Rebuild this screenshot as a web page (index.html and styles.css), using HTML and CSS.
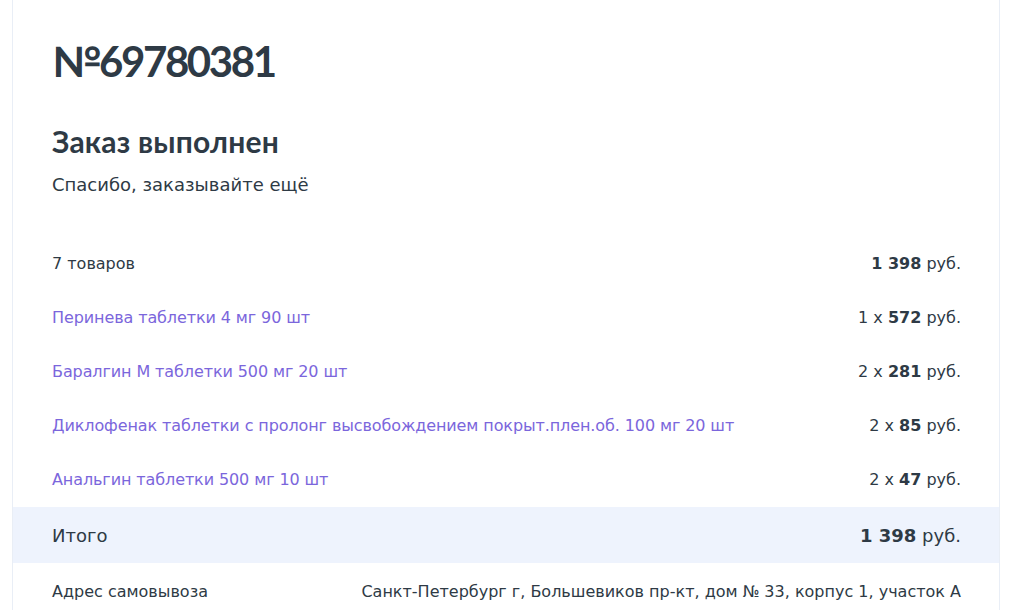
FILE: index.html
```html
<!DOCTYPE html>
<html lang="ru">
<head>
  <meta charset="UTF-8" />
  <title>Заказ №69780381</title>
  <link rel="stylesheet" href="styles.css">
</head>
<body>
  <main class="order">
    <div class="order-head">
      <h1>№69780381</h1>
      <h2>Заказ выполнен</h2>
      <p>Спасибо, заказывайте ещё</p>
    </div>
    <div class="order-items">
      <div class="row">
        <span>7 товаров</span>
        <span><b>1 398</b> руб.</span>
      </div>
      <div class="row">
        <a href="#">Перинева таблетки 4 мг 90 шт</a>
        <span>1 x <b>572</b> руб.</span>
      </div>
      <div class="row">
        <a href="#">Баралгин М таблетки 500 мг 20 шт</a>
        <span>2 x <b>281</b> руб.</span>
      </div>
      <div class="row">
        <a href="#">Диклофенак таблетки с пролонг высвобождением покрыт.плен.об. 100 мг 20 шт</a>
        <span>2 x <b>85</b> руб.</span>
      </div>
      <div class="row">
        <a href="#">Анальгин таблетки 500 мг 10 шт</a>
        <span>2 x <b>47</b> руб.</span>
      </div>
    </div>
    <div class="row total">
      <span>Итого</span>
      <span><b>1 398</b> руб.</span>
    </div>
    <div class="row address">
      <span>Адрес самовывоза</span>
      <span>Санкт-Петербург г, Большевиков пр-кт, дом № 33, корпус 1, участок А</span>
    </div>
  </main>
</body>
</html>
```

FILE: styles.css
```css
body {
  margin: 0;
  background: #fff;
  font-family: "DejaVu Sans", sans-serif;
  color: #2e3a45;
}
.order {
  margin: 0 12px;
  border-left: 1px solid #e9eef6;
  border-right: 1px solid #e9eef6;
  min-height: 640px;
}
.order-head {
  padding: 35px 39px 38px;
}
.order-head h1 {
  margin: 0;
  font-family: Lato, sans-serif;
  font-weight: 700;
  font-size: 42px;
  line-height: 52px;
  letter-spacing: -2.4px;
}
.order-head h2 {
  margin: 38px 0 0;
  font-family: Lato, sans-serif;
  font-weight: 700;
  font-size: 30px;
  line-height: 32px;
  letter-spacing: 0.2px;
}
.order-head p {
  margin: 15px 0 0;
  font-size: 18px;
  line-height: 26px;
}
.row {
  display: flex;
  justify-content: space-between;
  align-items: center;
  height: 54px;
  padding: 0 38px 0 39px;
  font-size: 16px;
}
.row a {
  color: #7b66dc;
  text-decoration: none;
  letter-spacing: -0.1px;
}
.total {
  height: 56px;
  margin-top: 1px;
  background: #eef3fd;
  font-size: 18px;
}
.address {
  height: 56px;
}
```
